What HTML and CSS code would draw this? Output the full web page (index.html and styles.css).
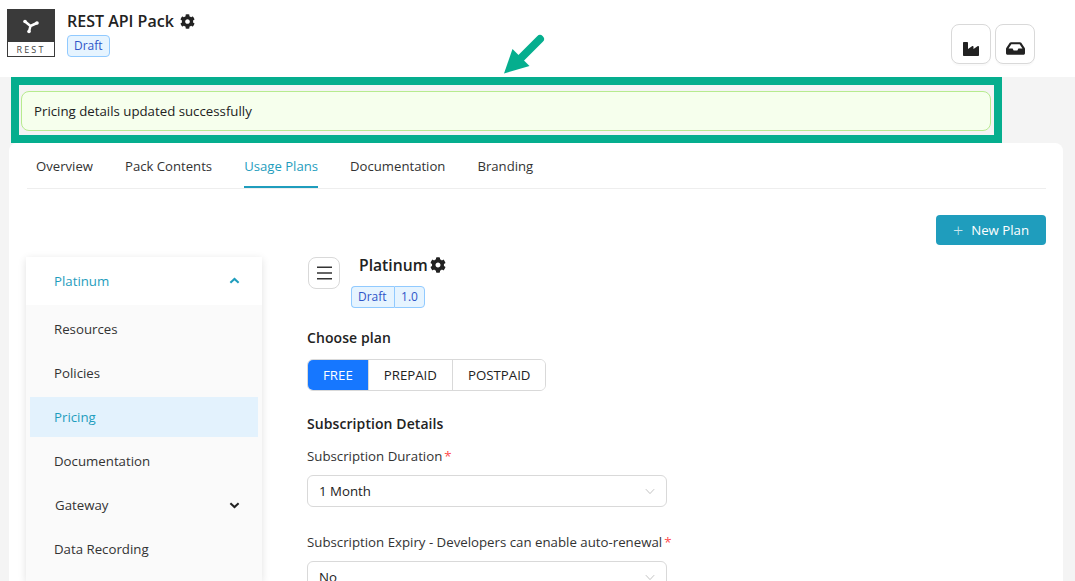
FILE: index.html
```html
<!DOCTYPE html>
<html lang="en">
<head>
    <meta charset="UTF-8">
    <title>REST API Pack</title>
    <link rel="stylesheet" href="styles.css">
</head>
<body>
    <!-- Pack header -->
    <header class="top">
        <div class="logo">
            <div class="logo-art">
                <svg width="16" height="16" viewBox="0 0 16 16">
                    <path d="M2 3.5 L7.5 8 L14 5 M7.5 8 L6 13.5" stroke="#fff" stroke-width="2.5" fill="none"/>
                    <circle cx="2" cy="3.5" r="1.8" fill="#fff"/>
                    <circle cx="14" cy="5" r="1.8" fill="#fff"/>
                    <circle cx="6" cy="13.5" r="1.8" fill="#fff"/>
                </svg>
            </div>
            <div class="logo-text">REST</div>
        </div>
        <div class="pack-info">
            <div class="pack-title">REST API Pack
                <svg class="cog" viewBox="0 0 512 512"><path d="M487.4 315.7l-42.6-24.6c4.3-23.2 4.3-47 0-70.2l42.6-24.6c4.9-2.8 7.1-8.6 5.5-14-11.1-35.6-30-67.8-54.7-94.6-3.8-4.1-10-5.1-14.8-2.3L380.8 110c-17.9-15.4-38.5-27.3-60.8-35.1V25.8c0-5.6-3.9-10.5-9.4-11.7-36.7-8.2-74.3-7.8-109.2 0-5.5 1.2-9.4 6.1-9.4 11.7V75c-22.2 7.9-42.8 19.8-60.8 35.1L88.7 85.5c-4.9-2.8-11-1.9-14.8 2.3-24.7 26.7-43.6 58.9-54.7 94.6-1.7 5.4.6 11.2 5.5 14L67.3 221c-4.3 23.2-4.3 47 0 70.2l-42.6 24.6c-4.9 2.8-7.1 8.6-5.5 14 11.1 35.6 30 67.8 54.7 94.6 3.8 4.1 10 5.1 14.8 2.3l42.6-24.6c17.9 15.4 38.5 27.3 60.8 35.1v49.2c0 5.6 3.9 10.5 9.4 11.7 36.7 8.2 74.3 7.8 109.2 0 5.5-1.2 9.4-6.1 9.4-11.7v-49.2c22.2-7.9 42.8-19.8 60.8-35.1l42.6 24.6c4.9 2.8 11 1.9 14.8-2.3 24.7-26.7 43.6-58.9 54.7-94.6 1.5-5.5-.7-11.3-5.6-14.1zM256 336c-44.1 0-80-35.9-80-80s35.9-80 80-80 80 35.9 80 80-35.9 80-80 80z"/></svg>
            </div>
            <span class="badge">Draft</span>
        </div>
        <div class="top-actions">
            <button class="icon-btn">
                <svg width="16" height="16" viewBox="0 0 512 512"><path d="M475.115 163.781L336 252.309v-68.28c0-18.916-20.931-30.399-36.885-20.248L160 252.309V56c0-13.255-10.745-24-24-24H24C10.745 32 0 42.745 0 56v400c0 13.255 10.745 24 24 24h464c13.255 0 24-10.745 24-24V184.029c0-18.917-20.931-30.399-36.885-20.248z"/></svg>
            </button>
            <button class="icon-btn">
                <svg width="19" height="17" viewBox="0 0 576 512"><path d="M567.938 243.908L462.25 85.374A48.003 48.003 0 0 0 422.311 64H153.689a48 48 0 0 0-39.938 21.374L8.062 243.908A47.994 47.994 0 0 0 0 270.533V400c0 26.51 21.49 48 48 48h480c26.51 0 48-21.49 48-48V270.533a47.994 47.994 0 0 0-8.062-26.625zM162.252 128h251.497l85.333 128H376l-32 64H232l-32-64H76.918l85.334-128z"/></svg>
            </button>
        </div>
    </header>

    <!-- Arrow pointing at the message -->
    <svg class="arrow" width="44" height="44" viewBox="0 0 44 44">
        <path d="M38 7 L17 28" stroke="#05ae8e" stroke-width="8" stroke-linecap="round"/>
        <path d="M2 41.5 L10.5 17 L27.5 34 Z" fill="#05ae8e"/>
    </svg>

    <!-- Highlighted success message -->
    <div class="notice-frame">
        <div class="alert">Pricing details updated successfully</div>
    </div>

    <!-- Main card -->
    <main class="card">
        <nav class="tabs">
            <a class="tab">Overview</a>
            <a class="tab">Pack Contents</a>
            <a class="tab active">Usage Plans</a>
            <a class="tab">Documentation</a>
            <a class="tab">Branding</a>
        </nav>

        <div class="toolbar">
            <button class="btn-new"><span class="plus">+</span>New Plan</button>
        </div>

        <div class="plan-layout">
            <aside class="side">
                <div class="side-head">
                    <span>Platinum</span>
                    <svg class="chev" viewBox="0 0 12 8"><path d="M1.5 6 L6 1.8 L10.5 6" stroke="#1f9dbd" stroke-width="2.2" fill="none"/></svg>
                </div>
                <ul class="side-list">
                    <li>Resources</li>
                    <li>Policies</li>
                    <li class="current">Pricing</li>
                    <li>Documentation</li>
                    <li class="has-sub">Gateway
                        <svg class="chev" viewBox="0 0 12 8"><path d="M1.5 2 L6 6.2 L10.5 2" stroke="#222" stroke-width="2.2" fill="none"/></svg>
                    </li>
                    <li>Data Recording</li>
                </ul>
            </aside>

            <section class="plan">
                <div class="plan-head">
                    <button class="menu-btn">
                        <svg width="15" height="14" viewBox="0 0 15 14"><path d="M0 1.3h15M0 7h15M0 12.7h15" stroke="#333" stroke-width="1.5"/></svg>
                    </button>
                    <div class="plan-name">Platinum<svg class="cog" viewBox="0 0 512 512"><path d="M487.4 315.7l-42.6-24.6c4.3-23.2 4.3-47 0-70.2l42.6-24.6c4.9-2.8 7.1-8.6 5.5-14-11.1-35.6-30-67.8-54.7-94.6-3.8-4.1-10-5.1-14.8-2.3L380.8 110c-17.9-15.4-38.5-27.3-60.8-35.1V25.8c0-5.6-3.9-10.5-9.4-11.7-36.7-8.2-74.3-7.8-109.2 0-5.5 1.2-9.4 6.1-9.4 11.7V75c-22.2 7.9-42.8 19.8-60.8 35.1L88.7 85.5c-4.9-2.8-11-1.9-14.8 2.3-24.7 26.7-43.6 58.9-54.7 94.6-1.7 5.4.6 11.2 5.5 14L67.3 221c-4.3 23.2-4.3 47 0 70.2l-42.6 24.6c-4.9 2.8-7.1 8.6-5.5 14 11.1 35.6 30 67.8 54.7 94.6 3.8 4.1 10 5.1 14.8 2.3l42.6-24.6c17.9 15.4 38.5 27.3 60.8 35.1v49.2c0 5.6 3.9 10.5 9.4 11.7 36.7 8.2 74.3 7.8 109.2 0 5.5-1.2 9.4-6.1 9.4-11.7v-49.2c22.2-7.9 42.8-19.8 60.8-35.1l42.6 24.6c4.9 2.8 11 1.9 14.8-2.3 24.7-26.7 43.6-58.9 54.7-94.6 1.5-5.5-.7-11.3-5.6-14.1zM256 336c-44.1 0-80-35.9-80-80s35.9-80 80-80 80 35.9 80 80-35.9 80-80 80z"/></svg></div>
                </div>
                <div class="badge-group">
                    <span class="badge">Draft</span><span class="badge">1.0</span>
                </div>

                <h4 class="section-title choose">Choose plan</h4>
                <div class="segment">
                    <span class="seg on">FREE</span>
                    <span class="seg">PREPAID</span>
                    <span class="seg">POSTPAID</span>
                </div>

                <h4 class="section-title details">Subscription Details</h4>
                <label class="field-label">Subscription Duration<em>*</em></label>
                <div class="select">
                    <span>1 Month</span>
                    <svg class="caret" viewBox="0 0 12 8"><path d="M1 1.2 L6 6.5 L11 1.2" stroke="#bdbdbd" stroke-width="1.1" fill="none"/></svg>
                </div>

                <label class="field-label second">Subscription Expiry - Developers can enable auto-renewal<em>*</em></label>
                <div class="select">
                    <span>No</span>
                    <svg class="caret" viewBox="0 0 12 8"><path d="M1 1.2 L6 6.5 L11 1.2" stroke="#bdbdbd" stroke-width="1.1" fill="none"/></svg>
                </div>
            </section>
        </div>
    </main>
</body>
</html>
```

FILE: styles.css
```css
/* Page */
html, body {
    height: 581px;
    overflow: hidden;
}

body {
    margin: 0;
    background: #f4f4f4;
    font-family: "Open Sans", "Noto Sans", sans-serif;
    font-size: 13.25px;
    color: #222;
    position: relative;
}

/* Header */
.top {
    height: 77px;
    box-sizing: border-box;
    background: #fff;
    display: flex;
    padding: 9px 40px 0 7px;
}

.logo {
    width: 48px;
    height: 48px;
    box-sizing: border-box;
    border: 1px solid #3a3a3a;
    margin-right: 12px;
}

.logo-art {
    height: 32px;
    background: #3a3a3a;
    display: flex;
    align-items: center;
    justify-content: center;
}

.logo-text {
    font-size: 9px;
    letter-spacing: 2.2px;
    text-align: center;
    line-height: 15px;
    color: #444;
}

.pack-info {
    display: flex;
    flex-direction: column;
    align-items: flex-start;
}

.pack-title {
    font-size: 16px;
    font-weight: 600;
    line-height: 20px;
    margin: 2px 0 4px;
    display: flex;
    align-items: center;
    gap: 6px;
}

.cog {
    width: 15px;
    height: 15px;
    fill: #222;
}

.badge {
    display: inline-block;
    font-size: 12px;
    line-height: 20px;
    padding: 0 6px;
    background: #e6f4ff;
    border: 1px solid #91caff;
    border-radius: 4px;
    color: #2f54c8;
}

.top-actions {
    margin-left: auto;
    display: flex;
    gap: 4px;
    padding-top: 15px;
}

.icon-btn {
    width: 40px;
    height: 40px;
    background: #fff;
    border: 1px solid #d9d9d9;
    border-radius: 8px;
    padding: 9px 0 0;
    display: flex;
    align-items: center;
    justify-content: center;
    box-shadow: 0 2px 0 rgba(0,0,0,0.02);
}

.icon-btn svg {
    fill: #222;
}

/* Annotation over the screenshot */
.arrow {
    position: absolute;
    left: 502px;
    top: 32px;
}

.notice-frame {
    width: 991px;
    box-sizing: border-box;
    margin-left: 11px;
    border: 8px solid #05ae8e;
    padding: 6px 3px 4px 2px;
}

.alert {
    height: 40px;
    box-sizing: border-box;
    background: #f6ffed;
    border: 1px solid #b7eb8f;
    border-radius: 8px;
    padding: 0 12px;
    display: flex;
    align-items: center;
}

/* Card */
.card {
    margin-left: 9px;
    width: 1054px;
    box-sizing: border-box;
    background: #fff;
    border-radius: 8px 8px 0 0;
    padding: 0 17px 0 18px;
    height: 438px;
}

.tabs {
    height: 46px;
    box-sizing: border-box;
    display: flex;
    gap: 32px;
    padding-left: 9px;
    border-bottom: 1px solid #eee;
    font-size: 13.15px;
}

.tab {
    line-height: 46px;
    height: 45px;
    box-sizing: border-box;
    color: #333;
}

.tab.active {
    color: #1f9dbd;
    border-bottom: 2px solid #1f9dbd;
}

.toolbar {
    display: flex;
    justify-content: flex-end;
    padding-top: 26px;
}

.btn-new {
    width: 110px;
    height: 30px;
    background: #1f9dbd;
    color: #fff;
    border: none;
    border-radius: 4px;
    font-family: inherit;
    font-size: 13.25px;
    padding: 0;
    display: flex;
    align-items: center;
    justify-content: center;
}

.plus {
    font-size: 18px;
    font-weight: 300;
    line-height: 1;
    margin-right: 8px;
    opacity: 0.75;
}

.plan-layout {
    display: flex;
    padding-top: 12px;
    margin-left: -1px;
}

/* Side menu */
.side {
    width: 236px;
    height: 324px;
    flex-shrink: 0;
    display: flex;
    flex-direction: column;
    background: #fff;
    box-shadow: 0 2px 8px rgba(0,0,0,0.12);
}

.side-head {
    height: 48px;
    flex-shrink: 0;
    display: flex;
    align-items: center;
    justify-content: space-between;
    padding: 0 22px 0 28px;
    color: #1f9dbd;
}

.chev {
    width: 11px;
    height: 8px;
}

.side-list {
    list-style: none;
    flex: 1;
    margin: 0;
    padding: 4px;
    background: #fafafa;
}

.side-list li {
    height: 40px;
    margin-bottom: 4px;
    padding: 0 18px 0 24px;
    display: flex;
    align-items: center;
    color: #333;
}

.side-list li.current {
    background: #e3f2fd;
    color: #1f9dbd;
}

.side-list li.has-sub {
    justify-content: space-between;
    padding-left: 25px;
}

/* Plan form */
.plan {
    margin-left: 45px;
    width: 400px;
}

.plan-head {
    display: flex;
    align-items: flex-start;
}

.menu-btn {
    width: 32px;
    height: 32px;
    margin-left: 1px;
    background: #fff;
    border: 1px solid #d9d9d9;
    border-radius: 8px;
    padding: 0;
    display: flex;
    align-items: center;
    justify-content: center;
}

.plan-name {
    margin: -1px 0 0 19px;
    font-size: 15.7px;
    font-weight: 600;
    line-height: 18px;
    display: flex;
    align-items: center;
    gap: 2px;
}

.plan-name .cog {
    width: 16px;
    height: 16px;
}

.badge-group {
    display: flex;
    margin: -3px 0 0 44px;
}

.badge-group .badge:first-child {
    border-radius: 4px 0 0 4px;
    border-right: none;
    padding-right: 7px;
}

.badge-group .badge:last-child {
    border-radius: 0 4px 4px 0;
    padding: 0 6.5px;
}

.section-title {
    margin: 0;
    font-size: 14px;
    font-weight: 600;
    line-height: 18px;
    letter-spacing: 0.08px;
}

.choose {
    margin-top: 21px;
}

.segment {
    display: inline-flex;
    margin-top: 12px;
    border: 1px solid #d9d9d9;
    border-radius: 6px;
    overflow: hidden;
    height: 32px;
    box-sizing: border-box;
}

.seg {
    padding: 0 15px;
    line-height: 30px;
    border-left: 1px solid #d9d9d9;
    background: #fff;
}

.seg:first-child {
    border-left: none;
}

.seg.on {
    background: #1677ff;
    color: #fff;
}

.details {
    margin-top: 24px;
}

.field-label {
    display: block;
    margin-top: 14px;
    line-height: 18px;
    color: #333;
}

.field-label.second {
    margin-top: 26px;
}

.field-label em {
    color: #ff4d4f;
    font-style: normal;
    margin-left: 2px;
}

.select {
    width: 360px;
    height: 32px;
    box-sizing: border-box;
    margin-top: 10px;
    border: 1px solid #d9d9d9;
    border-radius: 6px;
    background: #fff;
    padding: 0 11px;
    display: flex;
    align-items: center;
    justify-content: space-between;
}

.caret {
    width: 10px;
    height: 7px;
}
```
